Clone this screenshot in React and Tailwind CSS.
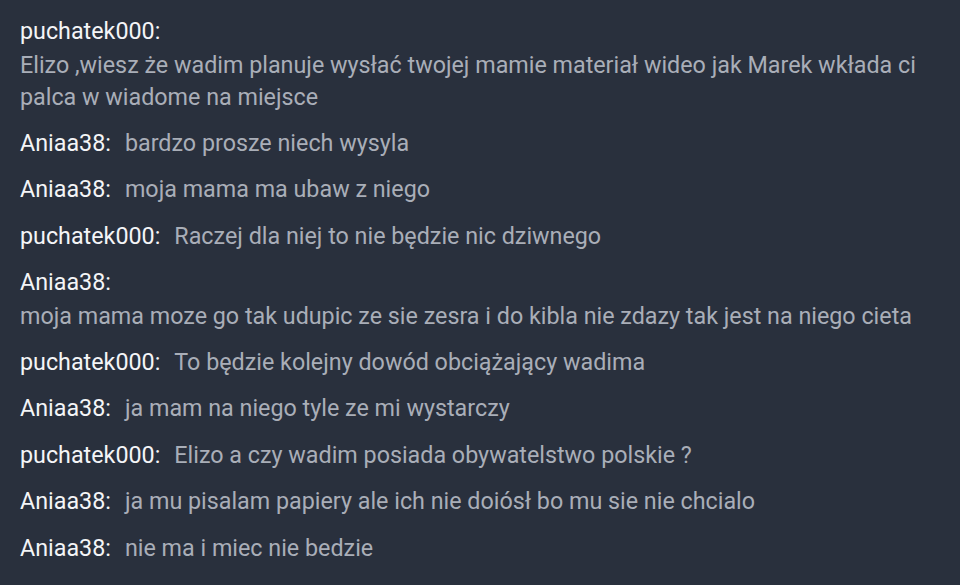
const messages = [
  { user: 'puchatek000', text: 'Elizo ,wiesz że wadim planuje wysłać twojej mamie materiał wideo jak Marek wkłada ci palca w wiadome na miejsce', block: true },
  { user: 'Aniaa38', text: 'bardzo prosze niech wysyla' },
  { user: 'Aniaa38', text: 'moja mama ma ubaw z niego' },
  { user: 'puchatek000', text: 'Raczej dla niej to nie będzie nic dziwnego' },
  { user: 'Aniaa38', text: 'moja mama moze go tak udupic ze sie zesra i do kibla nie zdazy tak jest na niego cieta', block: true },
  { user: 'puchatek000', text: 'To będzie kolejny dowód obciążający wadima' },
  { user: 'Aniaa38', text: 'ja mam na niego tyle ze mi wystarczy' },
  { user: 'puchatek000', text: 'Elizo a czy wadim posiada obywatelstwo polskie ?' },
  { user: 'Aniaa38', text: 'ja mu pisalam papiery ale ich nie doiósł bo mu sie nie chcialo' },
  { user: 'Aniaa38', text: 'nie ma i miec nie bedzie' },
];

export default function App() {
  return (
    <div
      className="h-[585px] w-[960px] overflow-hidden bg-[#29303d] px-5 pt-[15px] text-[23.3px] leading-[32px]"
      style={{ fontFamily: 'Roboto, "Noto Sans", sans-serif' }}
    >
      <div className="flex flex-col gap-[14.4px]">
        {messages.map((m, i) =>
          m.block ? (
            <div key={i} className="flex flex-col gap-[1.5px]">
              <span className="text-[#f4f5f7]">{m.user}:</span>
              <span className="text-[#a9aeb8]">{m.text}</span>
            </div>
          ) : (
            <div key={i}>
              <span className="text-[#f4f5f7]">{m.user}:</span>
              <span className="ml-[14px] text-[#a9aeb8]">{m.text}</span>
            </div>
          )
        )}
      </div>
    </div>
  );
}
